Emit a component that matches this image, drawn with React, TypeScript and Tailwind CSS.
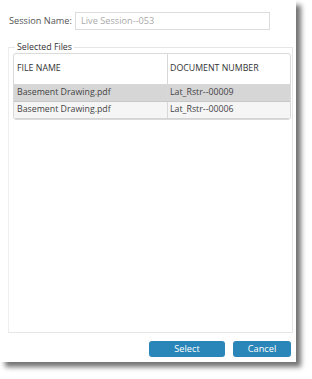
import React from "react";

const rows = [
  { file: "Basement Drawing.pdf", doc: "Lat_Rstr--00009", selected: true },
  { file: "Basement Drawing.pdf", doc: "Lat_Rstr--00006", selected: false },
];

const App = () => {
  return (
    <div
      className="w-[312px] h-[379px] bg-white overflow-hidden text-[8.8px] text-[#444]"
      style={{ fontFamily: '"Open Sans", "Liberation Sans", sans-serif' }}
    >
      <div className="w-[296px] h-[362px] bg-white shadow-[5px_5px_5px_rgba(0,0,0,0.55)] flex flex-col">
        {/* Session name */}
        <div className="flex items-center h-[18px] mt-[12px] pl-[9px]">
          <span className="w-[66px] whitespace-nowrap text-[9.2px] text-[#555]">Session Name:</span>
          <div className="w-[195px] h-[18px] border border-[#dcdcdc] flex items-center px-[5px] text-[9.2px] text-[#aaa]">
            Live Session--053
          </div>
        </div>

        {/* Selected files */}
        <fieldset className="mt-[11px] ml-[8px] w-[285px] h-[292px] border border-[#e6e6e6] border-l-[#eeeeee] pl-[4px] pr-[1px] pb-[5px] flex flex-col">
          <legend className="ml-[2px] px-[2px] leading-[12px] text-[#333]">Selected Files</legend>
          <div className="flex-1 border border-[#dadada] rounded-[3px] overflow-hidden flex flex-col">
            <div className="grid grid-cols-[154px_1fr] h-[31px] border-b border-[#d8d8d8] text-[#333]">
              <div className="flex items-center pl-[3px] border-r border-[#d8d8d8]">FILE NAME</div>
              <div className="flex items-center pl-[2px]">DOCUMENT NUMBER</div>
            </div>
            {rows.map((r, i) => (
              <div
                key={i}
                className={
                  r.selected
                    ? "grid grid-cols-[154px_1fr] h-[17px] border-b border-[#c8c8c8] bg-[#d6d6d6]"
                    : "grid grid-cols-[154px_1fr] h-[17px] border-b border-[#d4d4d4] bg-[#f5f5f5]"
                }
              >
                <div className="flex items-center pl-[3px] border-r border-[#d8d8d8]">{r.file}</div>
                <div className="flex items-center pl-[2px]">{r.doc}</div>
              </div>
            ))}
          </div>
        </fieldset>

        {/* Buttons */}
        <div className="flex justify-end gap-[8px] mt-[8px] pr-[5px]">
          <button className="w-[76px] h-[16px] rounded-[3px] bg-[#2a86b8] text-white text-[9.2px] leading-none">
            Select
          </button>
          <button className="w-[58px] h-[16px] rounded-[3px] bg-[#2a86b8] text-white text-[9.2px] leading-none">
            Cancel
          </button>
        </div>
      </div>
    </div>
  );
};

export default App;
